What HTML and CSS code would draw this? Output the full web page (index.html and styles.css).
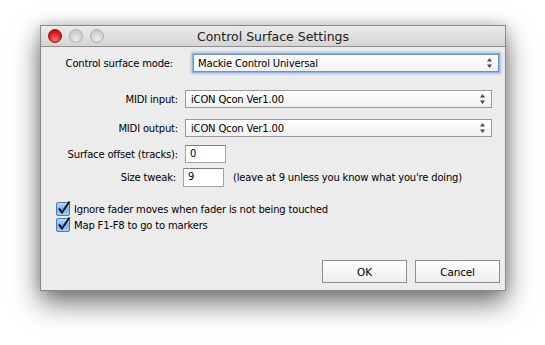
FILE: index.html
```html
<!DOCTYPE html>
<html lang="en">
<head>
    <meta charset="UTF-8">
    <title>Control Surface Settings</title>
    <link rel="stylesheet" href="styles.css">
</head>
<body>
    <div class="window">
        <div class="titlebar">
            <div class="lights">
                <span class="light close"></span>
                <span class="light"></span>
                <span class="light"></span>
            </div>
            <div class="title">Control Surface Settings</div>
            <div></div>
        </div>

        <div class="content">
            <div class="row row-mode">
                <span class="label">Control surface mode:</span>
                <div class="select focused">
                    <span>Mackie Control Universal</span>
                    <svg class="arrows" width="5" height="10" viewBox="0 0 5 10"><path d="M2.5 0 L5 3.5 L0 3.5 Z M0 6.5 L5 6.5 L2.5 10 Z" fill="#4a4a4a"/></svg>
                </div>
            </div>

            <div class="row row-input">
                <span class="label">MIDI input:</span>
                <div class="select">
                    <span>iCON Qcon Ver1.00</span>
                    <svg class="arrows" width="5" height="10" viewBox="0 0 5 10"><path d="M2.5 0 L5 3.5 L0 3.5 Z M0 6.5 L5 6.5 L2.5 10 Z" fill="#4a4a4a"/></svg>
                </div>
            </div>

            <div class="row row-output">
                <span class="label">MIDI output:</span>
                <div class="select">
                    <span>iCON Qcon Ver1.00</span>
                    <svg class="arrows" width="5" height="10" viewBox="0 0 5 10"><path d="M2.5 0 L5 3.5 L0 3.5 Z M0 6.5 L5 6.5 L2.5 10 Z" fill="#4a4a4a"/></svg>
                </div>
            </div>

            <div class="row row-offset">
                <span class="label">Surface offset (tracks):</span>
                <div class="field">0</div>
            </div>

            <div class="row row-size">
                <span class="label">Size tweak:</span>
                <div class="field">9</div>
                <span class="hint">(leave at 9 unless you know what you're doing)</span>
            </div>

            <div class="check-row first">
                <svg class="check" width="16" height="16" viewBox="0 0 16 16">
                    <defs>
                        <linearGradient id="cb" x1="0" y1="0" x2="0" y2="1">
                            <stop offset="0" stop-color="#c6def7"/>
                            <stop offset="0.5" stop-color="#80b3ea"/>
                            <stop offset="1" stop-color="#a7d0f5"/>
                        </linearGradient>
                    </defs>
                    <rect x="0.5" y="2.5" width="13" height="13" rx="1.5" fill="url(#cb)" stroke="#4f77a8"/>
                    <path d="M3 8.5 L6 12.5 L13.5 1.5" fill="none" stroke="#0f1f33" stroke-width="2.2" stroke-linejoin="round"/>
                </svg>
                <span>Ignore fader moves when fader is not being touched</span>
            </div>

            <div class="check-row">
                <svg class="check" width="16" height="16" viewBox="0 0 16 16">
                    <rect x="0.5" y="2.5" width="13" height="13" rx="1.5" fill="url(#cb)" stroke="#4f77a8"/>
                    <path d="M3 8.5 L6 12.5 L13.5 1.5" fill="none" stroke="#0f1f33" stroke-width="2.2" stroke-linejoin="round"/>
                </svg>
                <span>Map F1-F8 to go to markers</span>
            </div>

            <div class="buttons">
                <div class="button">OK</div>
                <div class="button">Cancel</div>
            </div>
        </div>
    </div>
</body>
</html>
```

FILE: styles.css
```css
html, body {
    min-height: 345px;
}
body {
    margin: 0;
    padding: 25px 0 54px 40px;
    box-sizing: border-box;
    background: #ffffff;
    font-family: "DejaVu Sans", sans-serif;
    font-size: 10px;
    letter-spacing: -0.18px;
    color: #000;
}
.window {
    width: 464px;
    background-color: #ececec;
    border: 1px solid #8a8a8a;
    box-shadow: 0 12px 26px rgba(0, 0, 0, 0.55), 0 0 12px rgba(0, 0, 0, 0.18);
}
.titlebar {
    height: 20px;
    display: grid;
    grid-template-columns: 1fr auto 1fr;
    align-items: center;
    background: linear-gradient(#ebebeb, #d4d4d4);
    border-bottom: 1px solid #8f8f8f;
}
.lights {
    display: flex;
    gap: 7px;
    padding-left: 7px;
}
.light {
    width: 12px;
    height: 12px;
    border-radius: 50%;
    border: 1px solid #b0b0b0;
    background: radial-gradient(circle at 50% 75%, #ececec, #cbcbcb 70%);
}
.light.close {
    border-color: #9c1010;
    background: radial-gradient(circle at 50% 75%, #ff7a7a, #e01a1a 55%, #b80808);
}
.title {
    font-size: 12.5px;
    letter-spacing: 0;
    color: #222;
    padding-top: 1px;
}
.content {
    padding: 0 0 7px 0;
}
.row {
    display: flex;
    align-items: center;
    height: 18px;
}
.label {
    width: 137px;
    text-align: right;
    margin-right: 7px;
}
.row-mode {
    margin-top: 7px;
}
.row-mode .label {
    width: 132px;
    margin-right: 20px;
}
.row-input {
    margin-top: 18px;
}
.row-output {
    margin-top: 11px;
}
.row-offset {
    margin-top: 8px;
}
.row-size {
    margin-top: 5px;
    height: 19px;
}
.row-size .label {
    width: 135px;
}
.select {
    box-sizing: border-box;
    width: 307px;
    height: 18px;
    display: flex;
    align-items: center;
    justify-content: space-between;
    padding: 0 6px 0 4px;
    background: linear-gradient(#ffffff, #f1f1f1);
    border: 1px solid #9a9a9a;
}
.select.focused {
    width: 306px;
    padding-right: 6px;
    border-color: #6d94c9;
    box-shadow: 0 0 0 1px #8bb3e6, 0 0 2px 2px rgba(110, 160, 225, 0.55);
}
.row-input .select,
.row-output .select {
    padding-left: 5px;
}
.field {
    box-sizing: border-box;
    width: 41px;
    height: 100%;
    padding: 2px 4px 0;
    background: #fff;
    border: 1px solid #a4a4a4;
    border-top-color: #7e7e7e;
}
.hint {
    margin-left: 9px;
}
.check-row {
    display: flex;
    align-items: center;
    height: 16px;
    padding-left: 15px;
    gap: 2px;
}
.check-row.first {
    margin-top: 14px;
}
.check {
    margin-top: -3px;
}
.buttons {
    display: flex;
    justify-content: flex-end;
    gap: 8px;
    margin-top: 27px;
    padding-right: 5px;
}
.button {
    box-sizing: border-box;
    width: 85px;
    height: 23px;
    display: flex;
    align-items: center;
    justify-content: center;
    font-size: 10.5px;
    background: linear-gradient(#ffffff, #eeeeee);
    border: 1px solid #8e8e8e;
}
```
